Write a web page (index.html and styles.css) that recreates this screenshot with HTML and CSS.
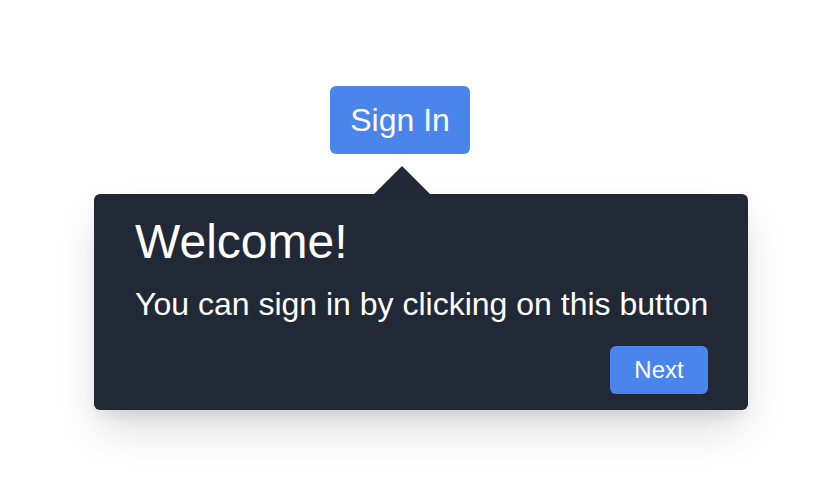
FILE: index.html
```html
<!DOCTYPE html>
<html lang="en">
<head>
<meta charset="utf-8">
<title>Sign In tour</title>
<link rel="stylesheet" href="styles.css">
</head>
<body>
<main class="stage">
  <div class="anchor">
    <button class="btn btn-signin" type="button">Sign In</button>
    <div class="tour" role="dialog" aria-labelledby="tour-title">
      <span class="tour-arrow"></span>
      <div class="tour-card">
        <h2 class="tour-title" id="tour-title">Welcome!</h2>
        <p class="tour-text">You can sign in by clicking on this button</p>
        <div class="tour-actions">
          <button class="btn btn-next" type="button">Next</button>
        </div>
      </div>
    </div>
  </div>
</main>
</body>
</html>
```

FILE: styles.css
```css
* { box-sizing: border-box; }

html, body {
  margin: 0;
  padding: 0;
  background: #ffffff;
  font-family: "Liberation Sans", Arial, Helvetica, sans-serif;
}

.stage {
  width: 836px;
  height: 488px;
  padding: 86px 0 0 330px;
}

.anchor {
  position: relative;
  display: inline-block;
}

.btn {
  border: 0;
  margin: 0;
  color: #ffffff;
  background: #4a85ec;
  font-family: inherit;
  cursor: pointer;
  border-radius: 6px;
}

.btn-signin {
  display: block;
  width: 140px;
  height: 68px;
  padding: 0;
  font-size: 32px;
  line-height: 68px;
}

.tour {
  position: absolute;
  top: 80px;
  left: -236px;
  width: 654px;
}

.tour-arrow {
  display: block;
  width: 0;
  height: 0;
  margin-left: 280px;
  border-left: 28px solid transparent;
  border-right: 28px solid transparent;
  border-bottom: 28px solid #222936;
}

.tour-card {
  background: #222936;
  border-radius: 6px;
  padding: 20px 40px 16px 41px;
  color: #ffffff;
  box-shadow: 0 22px 40px -6px rgba(0, 0, 0, 0.16), 0 8px 14px -4px rgba(0, 0, 0, 0.08);
}

.tour-title {
  margin: 0;
  font-size: 48px;
  line-height: 56px;
  font-weight: 400;
}

.tour-text {
  margin: 14px 0 0;
  font-size: 32px;
  line-height: 40px;
  white-space: nowrap;
}

.tour-actions {
  display: flex;
  justify-content: flex-end;
  margin-top: 22px;
}

.btn-next {
  width: 98px;
  height: 48px;
  padding: 0;
  font-size: 24px;
  line-height: 48px;
}
```
